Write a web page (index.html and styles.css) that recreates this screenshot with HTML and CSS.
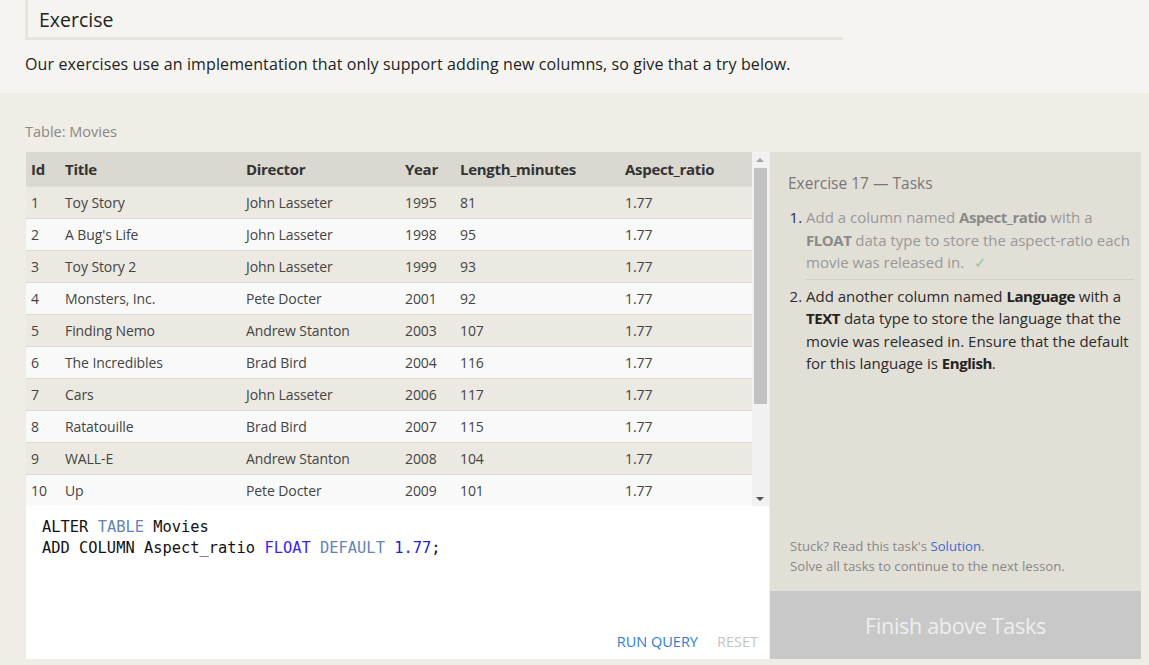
FILE: index.html
```html
<!DOCTYPE html>
<html>
<head>
<meta charset="utf-8">
<link rel="stylesheet" href="styles.css">
</head>
<body>
<section class="intro">
  <div class="h-box"><h2 class="h-title">Exercise</h2></div>
  <p class="intro-text">Our exercises use an implementation that only support adding new columns, so give that a try below.</p>
</section>
<section class="lower">
  <div class="table-label">Table: Movies</div>
  <div class="workspace">
    <div class="left">
      <div class="table-area">
        <div class="table-scroll">
          <table class="movies">
            <colgroup>
              <col class="c-id"><col class="c-title"><col class="c-dir"><col class="c-year"><col class="c-len"><col class="c-asp">
            </colgroup>
            <thead>
              <tr><th>Id</th><th>Title</th><th>Director</th><th>Year</th><th>Length_minutes</th><th>Aspect_ratio</th></tr>
            </thead>
            <tbody>
              <tr><td>1</td><td>Toy Story</td><td>John Lasseter</td><td>1995</td><td>81</td><td>1.77</td></tr>
              <tr><td>2</td><td>A Bug's Life</td><td>John Lasseter</td><td>1998</td><td>95</td><td>1.77</td></tr>
              <tr><td>3</td><td>Toy Story 2</td><td>John Lasseter</td><td>1999</td><td>93</td><td>1.77</td></tr>
              <tr><td>4</td><td>Monsters, Inc.</td><td>Pete Docter</td><td>2001</td><td>92</td><td>1.77</td></tr>
              <tr><td>5</td><td>Finding Nemo</td><td>Andrew Stanton</td><td>2003</td><td>107</td><td>1.77</td></tr>
              <tr><td>6</td><td>The Incredibles</td><td>Brad Bird</td><td>2004</td><td>116</td><td>1.77</td></tr>
              <tr><td>7</td><td>Cars</td><td>John Lasseter</td><td>2006</td><td>117</td><td>1.77</td></tr>
              <tr><td>8</td><td>Ratatouille</td><td>Brad Bird</td><td>2007</td><td>115</td><td>1.77</td></tr>
              <tr><td>9</td><td>WALL-E</td><td>Andrew Stanton</td><td>2008</td><td>104</td><td>1.77</td></tr>
              <tr><td>10</td><td>Up</td><td>Pete Docter</td><td>2009</td><td>101</td><td>1.77</td></tr>
            </tbody>
          </table>
        </div>
        <div class="scrollbar">
          <div class="arrow arrow-up"></div>
          <div class="thumb"></div>
          <div class="track-rest"></div>
          <div class="arrow arrow-down"></div>
        </div>
      </div>
      <div class="editor">
        <pre class="code"><span class="kw">ALTER</span> <span class="kw2">TABLE</span> Movies
<span class="kw">ADD COLUMN</span> Aspect_ratio <span class="type">FLOAT</span> <span class="kw2">DEFAULT</span> <span class="num">1.77</span>;</pre>
        <div class="editor-actions">
          <span class="btn-run">RUN QUERY</span>
          <span class="btn-reset">RESET</span>
        </div>
      </div>
    </div>
    <div class="right">
      <div class="tasks">
        <h3 class="tasks-title">Exercise 17 — Tasks</h3>
        <ol class="task-list">
          <li class="task done">Add a column named <b>Aspect_ratio</b> with a <b>FLOAT</b> data type to store the aspect-ratio each movie was released in. <span class="check">✓</span></li>
          <li class="task">Add another column named <b>Language</b> with a <b>TEXT</b> data type to store the language that the movie was released in. Ensure that the default for this language is <b>English</b>.</li>
        </ol>
        <div class="tasks-foot">
          <div>Stuck? Read this task's <span class="link">Solution</span>.</div>
          <div>Solve all tasks to continue to the next lesson.</div>
        </div>
      </div>
      <div class="finish">Finish above Tasks</div>
    </div>
  </div>
</section>
</body>
</html>
```

FILE: styles.css
```css
html, body {
  margin: 0;
  padding: 0;
}
body {
  font-family: "Open Sans", "Noto Sans", sans-serif;
  background: #efede6;
  color: #333;
  width: 1149px;
  height: 665px;
  overflow: hidden;
}
.intro {
  background: #f5f4f0;
  padding: 0 25px 0 25px;
  height: 93px;
  box-sizing: border-box;
}
.h-box {
  width: 818px;
  height: 40px;
  box-sizing: border-box;
  border-left: 3px solid #e6e4dc;
  border-bottom: 3px solid #e6e4dc;
  padding-left: 11px;
}
.h-title {
  margin: 0;
  font-weight: normal;
  font-size: 19.5px;
  line-height: 39px;
  color: #222;
}
.intro-text {
  margin: 12px 0 0 0;
  font-size: 16px;
  line-height: 24px;
  color: #222;
  letter-spacing: 0.12px;
}
.lower {
  padding-top: 29px;
}
.table-label {
  margin-left: 25px;
  font-size: 14.5px;
  line-height: 20px;
  color: #888;
}
.workspace {
  display: flex;
  gap: 1px;
  margin: 10px 0 0 26px;
  width: 1115px;
  height: 507px;
}
.left {
  width: 743px;
  display: flex;
  flex-direction: column;
}
.table-area {
  display: flex;
  height: 354px;
}
.table-scroll {
  width: 726px;
  overflow: hidden;
}
.movies {
  width: 726px;
  border-collapse: collapse;
  table-layout: fixed;
  font-size: 14px;
  letter-spacing: -0.1px;
}
.c-id { width: 34px; }
.c-title { width: 181px; }
.c-dir { width: 159px; }
.c-year { width: 55px; }
.c-len { width: 165px; }
.c-asp { width: 132px; }
.movies th {
  background: #dad8d0;
  height: 34px;
  padding: 0 0 0 5px;
  text-align: left;
  font-weight: bold;
  font-size: 15px;
  letter-spacing: -0.3px;
  color: #333;
}
.movies td {
  height: 31px;
  padding: 0 0 0 5px;
  border-top: 1px solid #dddbd5;
  color: #444;
  white-space: nowrap;
}
.movies tbody tr:nth-child(odd) td { background: #ebe9e2; }
.movies tbody tr:nth-child(even) td { background: #f9f9f9; }
.scrollbar {
  width: 17px;
  background: #f1f1f1;
  display: flex;
  flex-direction: column;
  align-items: center;
}
.arrow {
  height: 16px;
  width: 17px;
  position: relative;
}
.arrow-up::after, .arrow-down::after {
  content: "";
  position: absolute;
  left: 4px;
  width: 0;
  height: 0;
  border-left: 4px solid transparent;
  border-right: 4px solid transparent;
}
.arrow-up::after {
  top: 6px;
  border-bottom: 4px solid #a3a3a3;
}
.arrow-down::after {
  top: 7px;
  border-top: 4px solid #505050;
}
.thumb {
  width: 13px;
  height: 236px;
  background: #c1c1c1;
}
.track-rest {
  flex: 1;
}
.editor {
  background: #fff;
  flex: 1;
  display: flex;
  flex-direction: column;
}
.code {
  margin: 0;
  padding: 11px 0 0 16px;
  font-family: "DejaVu Sans Mono", "Liberation Mono", monospace;
  font-size: 15.4px;
  line-height: 21px;
  color: #111;
  flex: 1;
}
.kw { color: #111; }
.kw2 { color: #6483b6; }
.type { color: #3b1dff; }
.num { color: #1c22cc; }
.editor-actions {
  display: flex;
  justify-content: flex-end;
  gap: 19px;
  padding: 0 11px 7px 0;
  font-size: 14.5px;
  line-height: 20px;
  letter-spacing: 0;
}
.btn-run { color: #2e7ad8; }
.btn-reset { color: #c4c4c4; }
.right {
  width: 371px;
  display: flex;
  flex-direction: column;
}
.tasks {
  background: #e2dfd7;
  height: 439px;
  box-sizing: border-box;
  padding: 20px 7px 0 18px;
  display: flex;
  flex-direction: column;
}
.tasks-title {
  margin: 0;
  font-weight: normal;
  font-size: 15.5px;
  line-height: 22px;
  color: #777;
}
.task-list {
  margin: 12px 0 0 0;
  padding-left: 18px;
  font-size: 15px;
  line-height: 22.5px;
  letter-spacing: 0;
}
.task {
  color: #2a2a2a;
  padding-left: 0;
}
.task::marker { color: #2a2a4a; }
.task b { color: #222; letter-spacing: -0.45px; }
.task.done {
  color: #999;
  padding-bottom: 5px;
  border-bottom: 1px solid #d2cfc6;
  margin-bottom: 5px;
}
.task.done b { color: #8a8a8a; }
.check {
  color: #8fcc8f;
  margin-left: 6px;
}
.tasks-foot {
  margin-top: auto;
  padding: 0 0 15px 2px;
  font-size: 13.2px;
  line-height: 20px;
  color: #888;
}
.link { color: #3b6ad6; }
.finish {
  background: #c8c8c8;
  height: 68px;
  display: flex;
  align-items: center;
  justify-content: center;
  font-size: 21.5px;
  color: #eeeeee;
  letter-spacing: -0.3px;
}
```
